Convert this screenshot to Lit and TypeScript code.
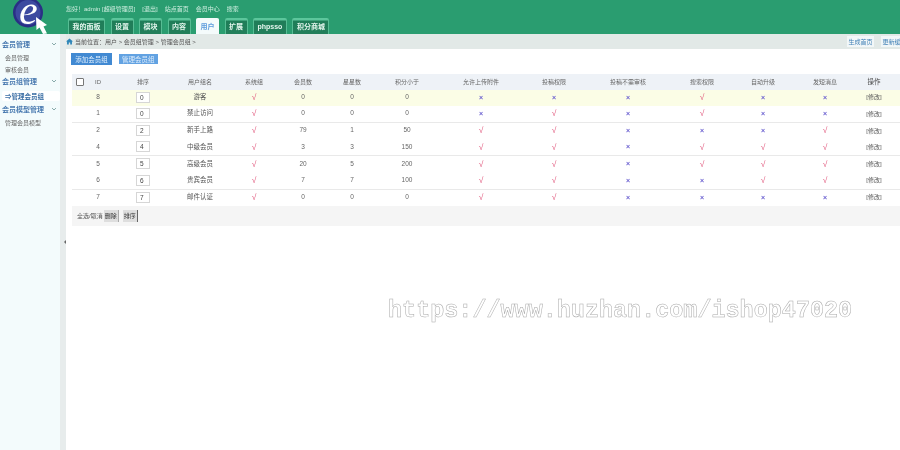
import { LitElement, html, css } from "lit";
import { customElement } from "lit/decorators.js";

const tabs = ["我的面板", "设置", "模块", "内容", "用户", "扩展", "phpsso", "积分商城"];
const heads = ["ID", "排序", "用户组名", "系统组", "会员数", "星星数", "积分小于", "允许上传附件", "投稿权限", "投稿不需审核", "搜索权限", "自动升级", "发短消息", "操作"];
const rows: any[] = [
  ["8", "0", "游客", "0", "0", "0", "000100", false],
  ["1", "0", "禁止访问", "0", "0", "0", "010100", true],
  ["2", "2", "新手上路", "79", "1", "50", "110001", false],
  ["4", "4", "中级会员", "3", "3", "150", "110111", true],
  ["5", "5", "高级会员", "20", "5", "200", "110111", false],
  ["6", "6", "贵宾会员", "7", "7", "100", "110011", true],
  ["7", "7", "邮件认证", "0", "0", "0", "110000", false],
];

@customElement("app-root")
export class AppRoot extends LitElement {
  static styles = css`
    :host { display: block; position: relative; width: 900px; height: 450px; overflow: hidden; background: #fff;
      font-family: "Liberation Sans", "Noto Sans CJK SC", sans-serif; font-size: 6.5px; color: #555; }
    .page { width: 900px; height: 450px; overflow: hidden; background: #fff; filter: blur(0.35px); }
    .header { height: 34px; background: #2a9d70; display: flex; }
    .logo { width: 66px; height: 34px; flex: none; }
    .hright { flex: 1; display: flex; flex-direction: column; }
    .topnav { height: 18px; display: flex; gap: 7px; align-items: center; color: #cfeee0; font-size: 6px; padding: 0 0 2px; box-sizing: border-box; }
    .tabs { display: flex; height: 16px; gap: 5.5px; padding-left: 2px; }
    .tab { padding: 0 3.5px; display: flex; align-items: center; font-size: 7px; font-weight: 700; color: #e4f6ee;
      background: linear-gradient(#5cc69c 0, #5cc69c 2px, #1f7d58 3px, #237f5b 100%); border-radius: 2px 2px 0 0;
      border-left: 1px solid #57bd94; border-right: 1px solid #57bd94; }
    .tab.on { background: #f4fbfb; color: #5b9bdc; border-color: #f4fbfb; }
    .body { display: flex; height: 416px; }
    .side { width: 60px; background: #f3fbfc; display: flex; flex-direction: column; padding-top: 5px; box-sizing: border-box; }
    .sh { height: 10px; flex: none; display: flex; align-items: center; justify-content: space-between; color: #4a7ab0; font-weight: 700; font-size: 7px; padding: 0 3px 0 2px; }
    .chev { width: 6px; height: 6px; }
    .si { height: 11.5px; flex: none; display: flex; align-items: center; padding-left: 5px; font-size: 6px; color: #666; }
    .si.on { margin: 5px 0 3px 2px; height: 10px; background: #fff; color: #3a6ea5; font-weight: 700; font-size: 6.5px; padding-left: 3px; border-radius: 2px; }
    .g1 { margin-top: 3px; }
    .g2 { margin-top: 0.5px; }
    .g5 { margin-top: 3.5px; }
    .split { width: 6px; background: #e7ecec; display: flex; align-items: center; justify-content: flex-end; padding-bottom: 1px; box-sizing: border-box; }
    .tri { width: 0; height: 0; border: 2px solid transparent; border-right: 2px solid #666; border-left: 0; }
    .main { flex: 1; display: flex; flex-direction: column; min-width: 0; }
    .crumb { height: 15px; background: #e2e9e7; display: flex; align-items: center; font-size: 6px; color: #555; gap: 2px; overflow: hidden; }
    .home { width: 7px; height: 7px; flex: none; }
    .crumbtext { flex: 1; }
    .rbtn { flex: none; background: #f2f7f8; color: #3f7fb5; padding: 1px 1.5px; margin-left: 5px; font-size: 6px; white-space: nowrap; }
    .rbtn.last { margin-right: -8px; }
    .content { padding: 4px 0 0 5px; }
    .btns { display: flex; gap: 7px; height: 12px; align-items: flex-start; }
    .b { background: #4189d2; color: #dcecfb; font-size: 6.5px; height: 12px; display: flex; align-items: center; padding: 0 4.25px; }
    .b.alt { height: 10px; margin-top: 1px; background: #62a2e2; padding: 0 3px; }
    table { margin: 9px 0 0 1px; border-collapse: collapse; table-layout: fixed; width: 828px; }
    th { height: 15.5px; background: #eef2f7; font-weight: 400; font-size: 6px; line-height: 1; color: #666; padding: 0; text-align: center; white-space: nowrap; }
    th.op { color: #444; font-size: 6.5px; }
    td { height: 16.6px; padding: 0 0 1px; text-align: center; font-size: 6.5px; line-height: 1; color: #666; white-space: nowrap; box-sizing: border-box; }
    tr.first td { background: #fbfde6; }
    tr.line td { border-bottom: 1px solid #e9e9e9; }
    .name { font-size: 6.5px; color: #555; }
    .cb { display: block; width: 6px; height: 6px; border: 1px solid #777; border-radius: 1px; background: #fff; margin: 0 auto; }
    .ord { display: block; width: 14px; height: 11px; box-sizing: border-box; border: 1px solid #d6d6d6; margin: 0 auto; font: 6.5px "Liberation Sans", sans-serif; padding: 0 0 0 3px; color: #444; background: #fff; outline: none; }
    .y { color: #e0557a; font-size: 8.5px; }
    .n { color: #6a5fd0; font-size: 7px; font-weight: 700; }
    .edit { font-size: 6px; color: #555; }
    .foot { height: 20px; background: #f5f5f5; display: flex; align-items: center; padding-left: 5px; margin-left: 1px; font-size: 6px; width: 823px; color: #555; }
    .fb { height: 12px; display: flex; align-items: center; padding: 0 1px; background: #dedede; color: #333; border-right: 1px solid #666; }
    .fb.d { margin-left: 1px; margin-right: 4px; border-right-color: #aaa; }
    .wm { position: absolute; left: 388px; top: 297px; font: 700 23.45px/28px "Liberation Mono", monospace; color: #fff; -webkit-text-stroke: 0.5px #aaaaaa; white-space: nowrap; filter: blur(0.2px); }
  `;

  private chev() {
    return html`<svg class="chev" viewBox="0 0 6 6"><path d="M1 2 L3 4 L5 2" fill="none" stroke="#8aa" stroke-width="1" /></svg>`;
  }

  render() {
    return html`
      <div class="page">
      <div class="header">
        <svg class="logo" viewBox="0 0 66 34">
          <circle cx="28" cy="12.5" r="15" fill="#2a2f85" />
          <circle cx="28" cy="12.5" r="12.5" fill="#3d4aa0" />
          <text x="19" y="24" font-family="Liberation Serif" font-style="italic" font-size="42" fill="#fff">e</text>
          <path d="M36 17 L36.5 30 L39.5 27.5 L43 34 L47 33.5 L43.5 26.5 L47 25 Z" fill="#fff" />
        </svg>
        <div class="hright">
          <div class="topnav"><span>您好！admin [超级管理员]</span><span>[退出]</span><span>站点首页</span><span>会员中心</span><span>搜索</span></div>
          <div class="tabs">
            ${tabs.map((t) => html`<div class="tab ${t === "用户" ? "on" : ""}">${t}</div>`)}
          </div>
        </div>
      </div>
      <div class="body">
        <div class="side">
          <div class="sh">会员管理 ${this.chev()}</div>
          <div class="si g1">会员管理</div>
          <div class="si">审核会员</div>
          <div class="sh g2">会员组管理 ${this.chev()}</div>
          <div class="si on">⇒管理会员组</div>
          <div class="sh">会员模型管理 ${this.chev()}</div>
          <div class="si g5">管理会员模型</div>
        </div>
        <div class="split"><span class="tri"></span></div>
        <div class="main">
          <div class="crumb">
            <svg class="home" viewBox="0 0 8 8"><path d="M4 0.5 L8 4 L6.8 4 L6.8 7.5 L4.8 7.5 L4.8 5 L3.2 5 L3.2 7.5 L1.2 7.5 L1.2 4 L0 4 Z" fill="#2f86b8" /></svg>
            <span class="crumbtext">当前位置：用户 &gt; 会员组管理 &gt; 管理会员组 &gt;</span>
            <span class="rbtn">生成首页</span><span class="rbtn last">更新缓存</span>
          </div>
          <div class="content">
            <div class="btns"><span class="b">添加会员组</span><span class="b alt">管理会员组</span></div>
            <table>
              <colgroup>
                ${[16, 20, 70, 44, 64, 34, 64, 46, 102, 44, 104, 44, 78, 46, 52].map((w) => html`<col style="width:${w}px" />`)}
              </colgroup>
              <thead>
                <tr><th><span class="cb"></span></th>${heads.map((h) => html`<th class="${h === "操作" ? "op" : ""}">${h}</th>`)}</tr>
              </thead>
              <tbody>
                ${rows.map((r: any, i: number) => html`
                  <tr class="${i === 0 ? "first" : ""} ${r[7] ? "line" : ""}">
                    <td></td>
                    <td>${r[0]}</td>
                    <td><input class="ord" .value=${r[1]} /></td>
                    <td class="name">${r[2]}</td>
                    <td class="y">√</td>
                    <td>${r[3]}</td><td>${r[4]}</td><td>${r[5]}</td>
                    ${[...r[6]].map((c: string) => c === "1" ? html`<td class="y">√</td>` : html`<td class="n">×</td>`)}
                    <td class="edit">[修改]</td>
                  </tr>`)}
              </tbody>
            </table>
            <div class="foot">全选/取消<span class="fb d">删除</span><span class="fb">排序</span></div>
          </div>
        </div>
      </div>
      </div>
      <div class="wm">https://www.huzhan.com/ishop47020</div>
    `;
  }
}
